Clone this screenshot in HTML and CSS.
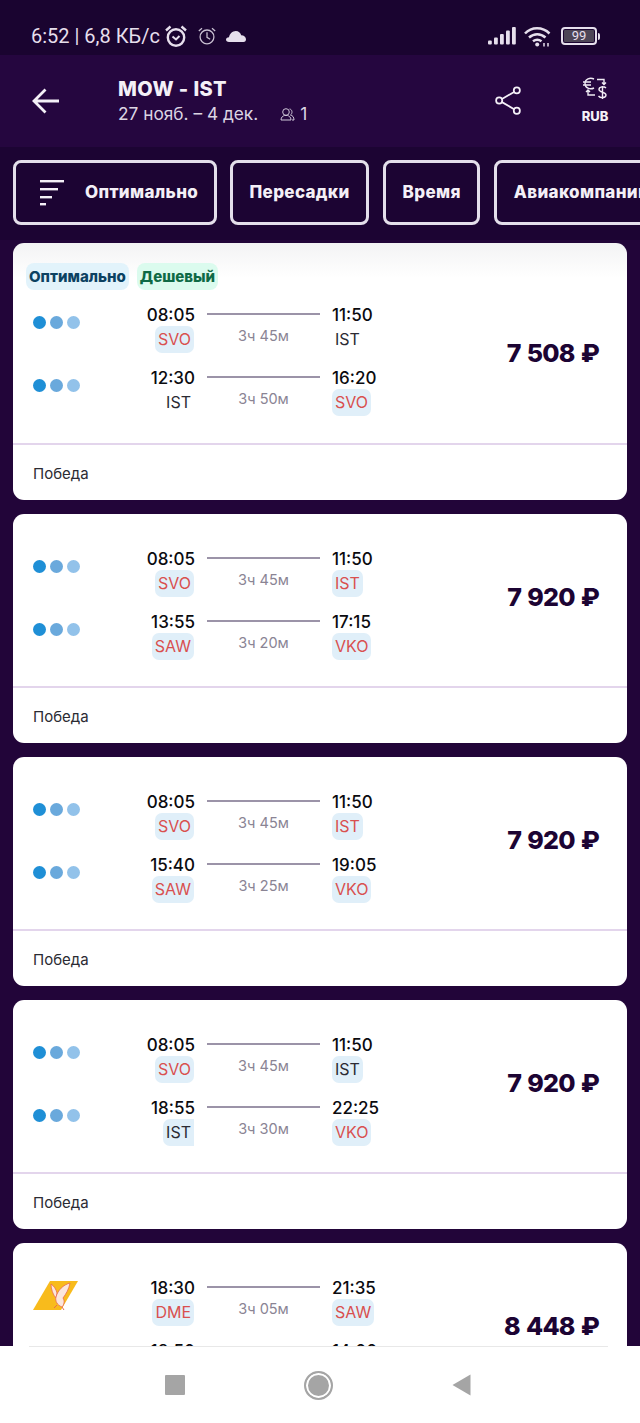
FILE: index.html
```html
<!DOCTYPE html>
<html lang="ru">
<head>
    <meta charset="UTF-8">
    <meta name="viewport" content="width=device-width, initial-scale=1.0">
    <title>MOW - IST</title>
    <link rel="stylesheet" href="styles.css">
</head>
<body>

<div class="screen">
    <div class="status-bar">
        <div class="status-left">
            <span class="status-text">6:52 | 6,8 КБ/с</span>
            <svg class="status-icon" width="24" height="24" viewBox="0 0 24 24" fill="none" stroke="#e6dfec">
                <circle cx="12" cy="13.5" r="8.2" stroke-width="2.4"/>
                <path d="M2 6.5 6.5 2.5M22 6.5 17.5 2.5" stroke-width="2.4"/>
                <path d="M8.5 12.5 12 15.5 15.5 12" stroke-width="2"/>
            </svg>
            <svg class="status-icon" width="20" height="20" viewBox="0 0 22 22" fill="none" stroke="#c9c1d2" stroke-width="1.4">
                <circle cx="11" cy="12" r="7.6"/>
                <path d="M2 5.5 5.5 2.5M20 5.5 16.5 2.5M11 7v5.5l3.5 2"/>
            </svg>
            <svg class="cloud" width="20" height="11" viewBox="0 0 20 11" fill="#e6dfec">
                <path d="M3 11C1 11 0 10 0 8.800S1 6.300 3 6.300C3.600 2.800 6.500 0 9.800 0c2.700 0 4.700 1.800 5.400 4.300 2.800 0 4.800 1.800 4.800 4 0 1.500-.8 2.700-2.500 2.700z"/>
            </svg>
        </div>
        <div class="status-right">
            <svg width="28" height="18" viewBox="0 0 28 18" fill="#e6dfec">
                <rect x="0" y="13.500" width="3.800" height="4" rx="1"/>
                <rect x="6" y="10.500" width="3.800" height="7" rx="1"/>
                <rect x="12" y="7" width="3.800" height="10.500" rx="1"/>
                <rect x="18" y="3.500" width="3.800" height="14" rx="1"/>
                <rect x="24" y="0" width="3.800" height="17.500" rx="1"/>
            </svg>
            <svg width="27" height="21" viewBox="0 0 27 21" fill="none" stroke="#e6dfec" stroke-width="2.500">
                <path d="M1 7.500C7.500 .6 18.500 .6 25.500 7.500"/>
                <path d="M5 11.500c5-4.500 11.500-4.500 16.500 0"/>
                <path d="M9 15.300c3-2.300 5.500-2.300 8.500 0"/>
                <circle cx="13.200" cy="18.500" r="2" fill="#e6dfec" stroke="none"/>
                <path d="M20 20.500v-3.500M24 20.500v-3.500" stroke-width="1.500"/>
            </svg>
            <div class="battery">
                <div class="battery-body"><span>99</span></div>
                <div class="battery-tip"></div>
            </div>
        </div>
    </div>

    <header class="top-bar">
        <svg class="back-icon" width="28" height="26" viewBox="0 0 28 26" fill="none" stroke="#f4f0f7" stroke-width="2.800">
            <path d="M27 13H2M13.500 1.500 2 13l11.500 11.500"/>
        </svg>
        <div class="route">
            <div class="route-title">MOW - IST</div>
            <div class="route-sub">
                <span>27 нояб. – 4 дек.</span>
                <svg class="pax-icon" width="15" height="13" viewBox="0 0 15 13" fill="none" stroke="#cfc7d8" stroke-width="1">
                    <circle cx="6" cy="4" r="3.300"/>
                    <path d="M1 12c0-3 2-4 3.500-4.500h3C9 8 11 9 11 12z"/>
                    <path d="M9.500 1c3 .3 3.200 4.500 1 6 2 .5 3.500 2 3.500 5h-2"/>
                </svg>
                <span>1</span>
            </div>
        </div>
        <svg class="share-icon" width="26" height="30" viewBox="0 0 28 32" fill="none" stroke="#f4f0f7" stroke-width="1.900">
            <circle cx="4.500" cy="15.500" r="3.300"/>
            <circle cx="23.500" cy="4.500" r="3.300"/>
            <circle cx="23.500" cy="26.500" r="3.300"/>
            <path d="M7.500 13.800 20.600 6.200M7.500 17.200l13.100 7.600"/>
        </svg>
        <div class="currency">
            <svg width="25" height="22" viewBox="0 0 25 22" fill="none" stroke="#f0ebf4" stroke-width="1.400">
                <path d="M11 2C7 0 2 2 2 6.500S7 13 11 11M0 5h8M0 8h8"/>
                <path d="M14 2.500h7v5M19 5.500l2 2 2-2"/>
                <path d="M12 18H5v-5M3 15l2-2 2 2"/>
                <path d="M23 11c-2-2-7-1.500-7 1.500s7 2.500 7 5.500-5.500 3.500-7.500 1M19.500 9v13"/>
            </svg>
            <span>RUB</span>
        </div>
    </header>

    <div class="filters">
        <div class="filter filter-sort">
            <svg width="26" height="28" viewBox="0 0 26 28" fill="#f4f0f7">
                <rect x="1" y="2" width="24" height="2.400"/>
                <rect x="1" y="10" width="18" height="2.400"/>
                <rect x="1" y="18" width="12" height="2.400"/>
                <rect x="1" y="25" width="6" height="2.400"/>
            </svg>
            <span>Оптимально</span>
        </div>
        <div class="filter">Пересадки</div>
        <div class="filter">Время</div>
        <div class="filter">Авиакомпании</div>
    </div>

    <main class="list">
        <section class="card card-first">
            <div class="tags">
                <span class="tag tag-best">Оптимально</span>
                <span class="tag tag-cheap">Дешевый</span>
            </div>
            <div class="card-main">
                <div class="legs">
                    <div class="leg">
                        <div class="dots"><i></i><i></i><i></i></div>
                        <div class="point point-dep"><b>08:05</b><span class="code">SVO</span></div>
                        <div class="path"><div class="path-line"></div><span>3ч 45м</span></div>
                        <div class="point point-arr"><b>11:50</b><span class="code code-plain">IST</span></div>
                    </div>
                    <div class="leg">
                        <div class="dots"><i></i><i></i><i></i></div>
                        <div class="point point-dep"><b>12:30</b><span class="code code-plain">IST</span></div>
                        <div class="path"><div class="path-line"></div><span>3ч 50м</span></div>
                        <div class="point point-arr"><b>16:20</b><span class="code">SVO</span></div>
                    </div>
                </div>
                <div class="price">7 508 ₽</div>
            </div>
            <div class="card-foot">Победа</div>
        </section>

        <section class="card">
            <div class="card-main">
                <div class="legs">
                    <div class="leg">
                        <div class="dots"><i></i><i></i><i></i></div>
                        <div class="point point-dep"><b>08:05</b><span class="code">SVO</span></div>
                        <div class="path"><div class="path-line"></div><span>3ч 45м</span></div>
                        <div class="point point-arr"><b>11:50</b><span class="code">IST</span></div>
                    </div>
                    <div class="leg">
                        <div class="dots"><i></i><i></i><i></i></div>
                        <div class="point point-dep"><b>13:55</b><span class="code">SAW</span></div>
                        <div class="path"><div class="path-line"></div><span>3ч 20м</span></div>
                        <div class="point point-arr"><b>17:15</b><span class="code">VKO</span></div>
                    </div>
                </div>
                <div class="price">7 920 ₽</div>
            </div>
            <div class="card-foot">Победа</div>
        </section>

        <section class="card">
            <div class="card-main">
                <div class="legs">
                    <div class="leg">
                        <div class="dots"><i></i><i></i><i></i></div>
                        <div class="point point-dep"><b>08:05</b><span class="code">SVO</span></div>
                        <div class="path"><div class="path-line"></div><span>3ч 45м</span></div>
                        <div class="point point-arr"><b>11:50</b><span class="code">IST</span></div>
                    </div>
                    <div class="leg">
                        <div class="dots"><i></i><i></i><i></i></div>
                        <div class="point point-dep"><b>15:40</b><span class="code">SAW</span></div>
                        <div class="path"><div class="path-line"></div><span>3ч 25м</span></div>
                        <div class="point point-arr"><b>19:05</b><span class="code">VKO</span></div>
                    </div>
                </div>
                <div class="price">7 920 ₽</div>
            </div>
            <div class="card-foot">Победа</div>
        </section>

        <section class="card">
            <div class="card-main">
                <div class="legs">
                    <div class="leg">
                        <div class="dots"><i></i><i></i><i></i></div>
                        <div class="point point-dep"><b>08:05</b><span class="code">SVO</span></div>
                        <div class="path"><div class="path-line"></div><span>3ч 45м</span></div>
                        <div class="point point-arr"><b>11:50</b><span class="code code-same">IST</span></div>
                    </div>
                    <div class="leg">
                        <div class="dots"><i></i><i></i><i></i></div>
                        <div class="point point-dep"><b>18:55</b><span class="code code-same code-cut">IST</span></div>
                        <div class="path"><div class="path-line"></div><span>3ч 30м</span></div>
                        <div class="point point-arr"><b>22:25</b><span class="code">VKO</span></div>
                    </div>
                </div>
                <div class="price">7 920 ₽</div>
            </div>
            <div class="card-foot">Победа</div>
        </section>

        <section class="card">
            <div class="card-main">
                <div class="legs">
                    <div class="leg">
                        <svg class="airline-logo" width="46" height="30" viewBox="0 0 46 30">
                            <path d="M17 0H45L28 29H0z" fill="#f8bb1c"/>
                            <path d="M18 3C18 8 20 14 23 17L24 12C23 8 21 5 18 3z" fill="#fbe6dc" stroke="#e86a50" stroke-width=".8"/>
                            <path d="M37 2C30 4 25 9 23 16 22 20 24 24 29 26 31 24 32 20 30 17 33 13 36 8 37 2z" fill="#fbe6dc" stroke="#e86a50" stroke-width=".8"/>
                            <path d="M29 26l2 3M24 24l-3 3" fill="none" stroke="#e86a50" stroke-width="1"/>
                        </svg>
                        <div class="point point-dep"><b>18:30</b><span class="code">DME</span></div>
                        <div class="path"><div class="path-line"></div><span>3ч 05м</span></div>
                        <div class="point point-arr"><b>21:35</b><span class="code">SAW</span></div>
                    </div>
                    <div class="leg">
                        <div class="dots"></div>
                        <div class="point point-dep"><b>18:50</b></div>
                        <div class="path"></div>
                        <div class="point point-arr"><b>14:00</b></div>
                    </div>
                </div>
                <div class="price">8 448 ₽</div>
            </div>
        </section>
    </main>

    <nav class="nav-bar">
        <div class="nav-rule"></div>
        <div class="nav-buttons">
            <div class="nav-square"></div>
            <div class="nav-circle"></div>
            <svg width="19" height="22" viewBox="0 0 19 22" fill="#a5a5a5">
                <path d="M18.500 .5v21L.5 11z"/>
            </svg>
        </div>
    </nav>
</div>

</body>
</html>
```

FILE: styles.css
```css
* {
    margin: 0;
    padding: 0;
    box-sizing: border-box;
}
body {
    font-family: Inter, 'Open Sans', sans-serif;
    background-color: #220539;
    overflow: hidden;
}
.screen {
    width: 640px;
    height: 1423px;
    display: flex;
    flex-direction: column;
    overflow: hidden;
}
.status-bar {
    height: 55px;
    flex-shrink: 0;
    background-color: #1a0430;
    display: flex;
    justify-content: space-between;
    align-items: center;
    padding: 17px 40px 0 31px;
    font-family: Roboto, sans-serif;
    color: #e6dfec;
}
.status-left {
    display: flex;
    align-items: center;
}
.status-text {
    font-size: 20px;
    margin-right: 4px;
}
.status-icon {
    margin-right: 9px;
}
.status-right {
    display: flex;
    align-items: center;
    gap: 8px;
}
.battery {
    display: flex;
    align-items: center;
    margin-left: 2px;
}
.battery-body {
    width: 36px;
    height: 18px;
    border: 2px solid #e6dfec;
    border-radius: 4px;
    padding: 1px;
}
.battery-body span {
    display: block;
    height: 100%;
    background-color: #4d4556;
    border-radius: 1px;
    color: #e6dfec;
    font-size: 13px;
    line-height: 12px;
    text-align: center;
}
.battery-tip {
    width: 2px;
    height: 7px;
    margin-left: 1px;
    background-color: #e6dfec;
    border-radius: 0 2px 2px 0;
}
.top-bar {
    height: 92px;
    flex-shrink: 0;
    background-color: #25063f;
    display: flex;
    align-items: center;
    padding-left: 32px;
    color: #f4f0f7;
}
.back-icon {
    margin-right: 58px;
}
.route {
    width: 377px;
    padding-top: 2px;
}
.route-title {
    font-size: 20px;
    font-weight: 800;
    line-height: 24px;
    letter-spacing: 0.4px;
}
.route-sub {
    display: flex;
    align-items: center;
    font-size: 17.300px;
    line-height: 26px;
    color: #dcd5e3;
}
.pax-icon {
    margin: 0 5px 0 22px;
}
.share-icon {
    margin-right: 59px;
    flex-shrink: 0;
}
.currency {
    width: 30px;
    flex-shrink: 0;
    display: flex;
    flex-direction: column;
    align-items: center;
    gap: 9px;
    margin-top: -2px;
}
.currency span {
    font-size: 13px;
    line-height: 16px;
    font-weight: 800;
}
.filters {
    height: 93px;
    flex-shrink: 0;
    background-color: #1c0433;
    display: flex;
    align-items: center;
    gap: 14px;
    padding: 0 0 3px 13px;
    overflow: hidden;
}
.filter {
    height: 65px;
    flex-shrink: 0;
    padding: 0 16.500px;
    display: flex;
    align-items: center;
    border: 3px solid #e4dfeb;
    border-radius: 8px;
    color: #f4f0f7;
    font-size: 17px;
    font-weight: 800;
    letter-spacing: 0.35px;
}
.filter-sort {
    width: 204px;
    margin-right: -1px;
    padding: 0 10px 0 23px;
    gap: 20px;
}
.list {
    flex: 1;
    min-height: 0;
    padding: 3px 13px 0;
    overflow: hidden;
    background-color: #220539;
}
.card {
    background-color: #fff;
    border-radius: 11px;
    margin-bottom: 14px;
}
.card-first {
    background: linear-gradient(#f3f3f4, #fff 35px);
    padding-top: 20px;
}
.tags {
    display: flex;
    gap: 8px;
    padding-left: 13px;
    margin-bottom: 1px;
}
.tag {
    height: 27px;
    line-height: 28px;
    padding: 0 3px;
    border-radius: 8px;
    font-size: 15px;
    font-weight: 800;
}
.tag-best {
    background-color: #e2f3fb;
    color: #0c4262;
}
.tag-cheap {
    background-color: #dbfbee;
    color: #0e6a45;
}
.card-main {
    height: 174px;
    padding: 35px 28px 0 20px;
    display: flex;
    justify-content: space-between;
    border-bottom: 2px solid #e3d5ec;
}
.card-first .card-main {
    padding-top: 14px;
    height: 154px;
}
.leg {
    display: flex;
    height: 63.200px;
}
.dots {
    width: 94px;
    height: 14px;
    margin-top: 11px;
    display: flex;
    gap: 4px;
    flex-shrink: 0;
}
.dots i {
    width: 13px;
    height: 13px;
    border-radius: 50%;
    background-color: #1f8fd6;
}
.dots i:nth-child(2) {
    background-color: #6aa9dc;
}
.dots i:nth-child(3) {
    background-color: #92c2ea;
}
.airline-logo {
    width: 46px;
    margin: 3px 48px 0 0;
    flex-shrink: 0;
}
.point {
    width: 68px;
    display: flex;
    flex-direction: column;
}
.point b {
    font-size: 17px;
    font-weight: 500;
    line-height: 20px;
    color: #0b0b0f;
}
.point-dep {
    align-items: flex-end;
}
.point-arr {
    align-items: flex-start;
    width: 60px;
}
.code {
    height: 27px;
    line-height: 27px;
    margin-top: 1px;
    padding: 0 3px;
    border-radius: 7px;
    background-color: #e0eff9;
    color: #d9504f;
    font-size: 16px;
}
.code-plain {
    background: none;
    color: #2b2b33;
}
.code-same {
    color: #2b2b33;
}
.code-cut {
    border-radius: 7px 0 0 7px;
}
.point-dep .code {
    margin-right: 1px;
}
.path {
    width: 113px;
    margin: 0 12px;
    text-align: center;
    color: #8a8494;
    font-size: 14.500px;
    flex-shrink: 0;
}
.path-line {
    height: 2px;
    margin: 8px 0 12px;
    background-color: #9b93a8;
}
.price {
    align-self: flex-start;
    margin-top: 33px;
    color: #1c0433;
    font-size: 25px;
    font-weight: 800;
    letter-spacing: -0.8px;
    word-spacing: 1.500px;
    white-space: nowrap;
}
.card-foot {
    height: 55px;
    padding: 19px 20px 0;
    font-size: 15px;
    color: #2b2b33;
}
.nav-bar {
    height: 77px;
    flex-shrink: 0;
    background-color: #fff;
    display: flex;
    flex-direction: column;
}
.nav-rule {
    height: 1px;
    margin: 0 32px 0 29px;
    background-color: #e8e8e8;
}
.nav-buttons {
    flex: 1;
    display: flex;
    justify-content: center;
    align-items: center;
    gap: 119px;
    padding-right: 5px;
}
.nav-square {
    width: 20px;
    height: 20px;
    background-color: #a5a5a5;
    border-radius: 1px;
}
.nav-circle {
    width: 29px;
    height: 29px;
    border: 2px solid #a5a5a5;
    border-radius: 50%;
    background-color: #a5a5a5;
    box-shadow: inset 0 0 0 2px #fff;
}
```
